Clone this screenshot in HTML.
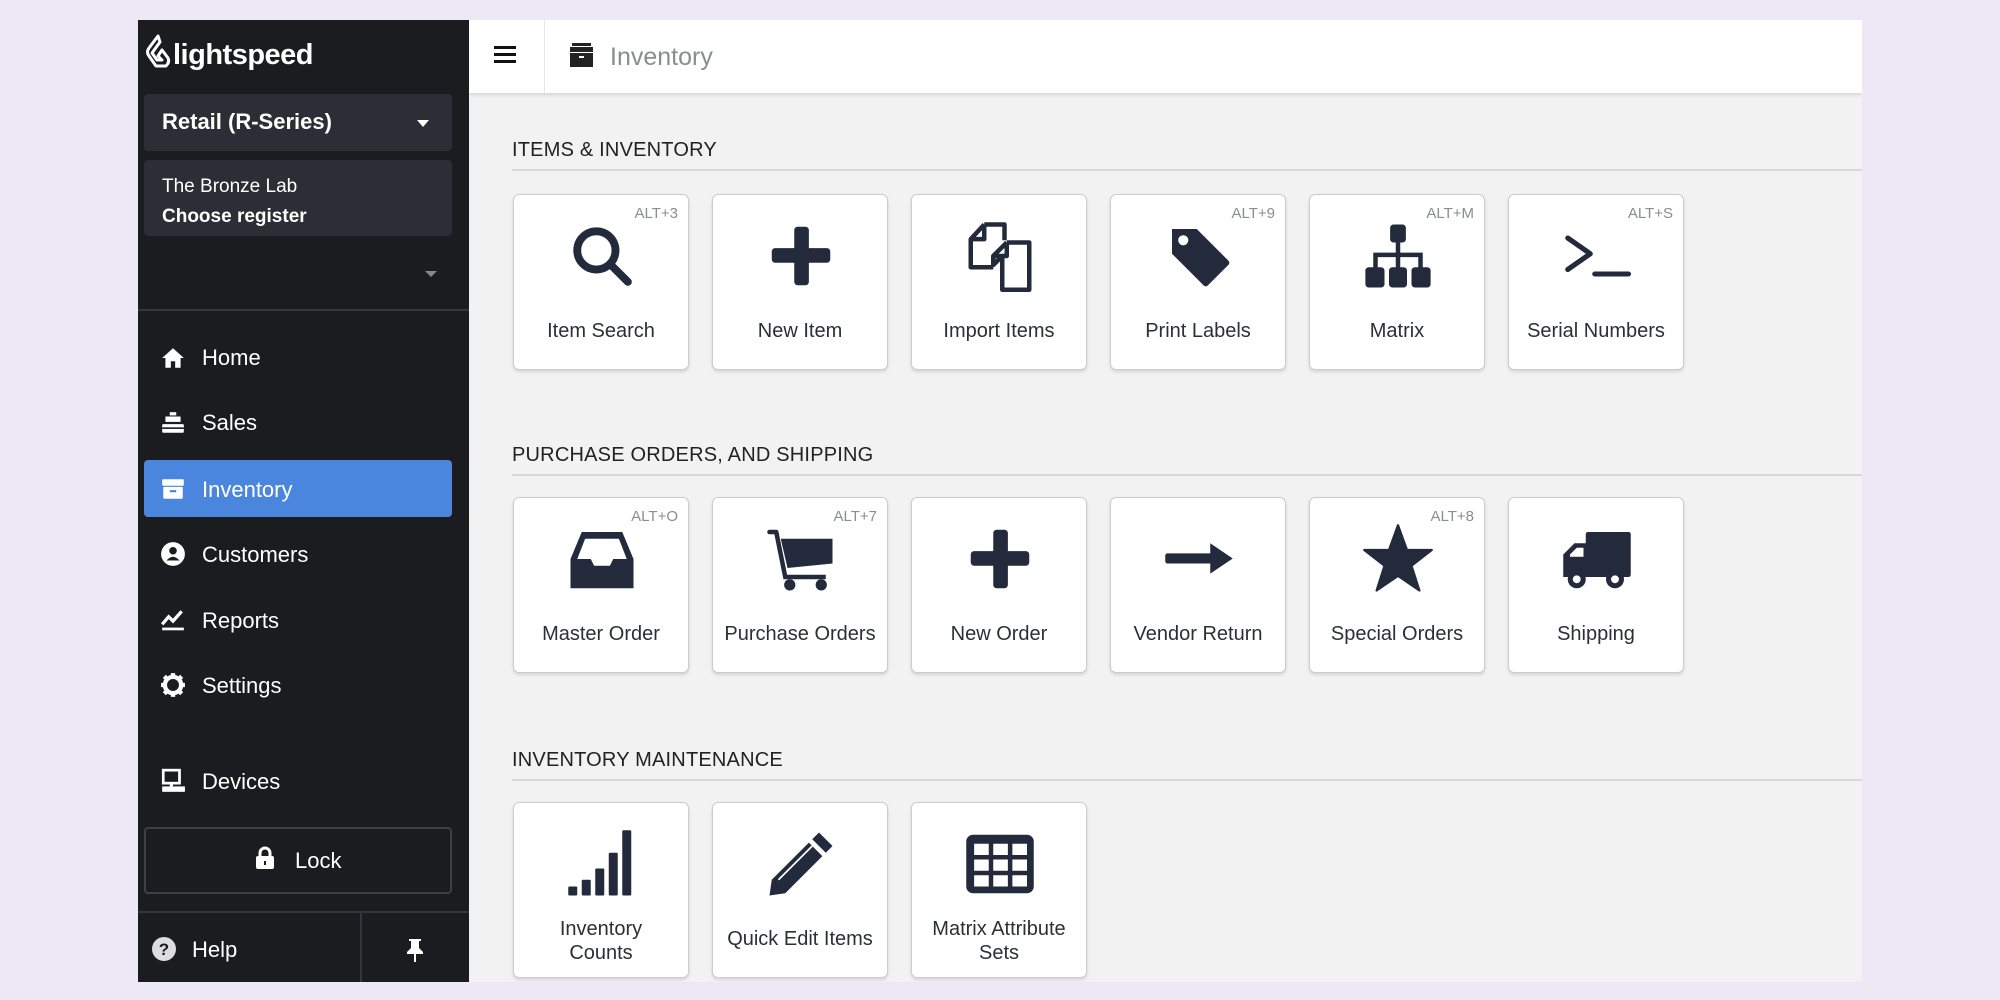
<!DOCTYPE html>
<html><head><meta charset="utf-8"><style>
*{box-sizing:border-box;margin:0;padding:0}
body{width:2000px;height:1000px;background:#ece8f6;position:relative;overflow:hidden;font-family:"Liberation Sans",sans-serif}
.sb{position:absolute;left:138px;top:20px;width:331px;height:962px;background:#1b1c20}
.main{position:absolute;left:469px;top:20px;width:1393px;height:962px;background:#f2f2f2;overflow:hidden}
.hdr{position:absolute;left:0;top:0;width:1393px;height:73px;background:#fff;box-shadow:0 2px 4px rgba(0,0,0,.12)}
.a{position:absolute}
.nav{position:absolute;left:64px;color:#fff;font-size:22px;line-height:22px}
.ni{position:absolute;left:22px;width:26px;height:26px}
.sec{position:absolute;left:43px;width:1400px;font-size:20px;color:#222;letter-spacing:.2px}
.line{position:absolute;left:43px;width:1360px;height:2px;background:#d6d8da}
.card{position:absolute;width:176px;height:176px;background:#fff;border:1.5px solid #c9cdcf;border-radius:6px;box-shadow:0 2px 3px rgba(0,0,0,.12)}
.card svg{position:absolute;left:52px;top:25px;width:72px;height:72px}
.card .l{position:absolute;left:0;right:0;top:124px;text-align:center;font-size:20px;color:#2b2f38;line-height:24px}
.card .k{position:absolute;right:10px;top:10px;font-size:15px;color:#8a8d91}
</style></head><body>
<div class="sb">
 <svg class="a" style="left:6px;top:14px" width="28" height="34" viewBox="0 0 28 34"><path d="M14 2 L5 14 Q2 18 5 22 L12 32 L22 32 Q26 28 24 24 L18 16 L14 22 L18 26 L13 26 L8 19 L16 8 Z" fill="none" stroke="#fff" stroke-width="3" stroke-linejoin="round"/></svg>
 <div class="a" style="left:35px;top:19px;color:#fff;font-size:29px;letter-spacing:-.5px;font-weight:bold">lightspeed</div>
 <div class="a" style="left:6px;top:74px;width:308px;height:57px;background:#2d2e35;border-radius:4px"></div>
 <div class="a" style="left:24px;top:89px;color:#fff;font-size:22px;font-weight:bold">Retail (R-Series)</div>
 <div class="a" style="left:279px;top:100px;border-left:6px solid transparent;border-right:6px solid transparent;border-top:7px solid #fff"></div>
 <div class="a" style="left:6px;top:140px;width:308px;height:76px;background:#2d2e35;border-radius:4px"></div>
 <div class="a" style="left:24px;top:152px;color:#fff;font-size:19px;line-height:30px">The Bronze Lab<br><b>Choose register</b></div>
 <div class="a" style="left:287px;top:251px;border-left:6px solid transparent;border-right:6px solid transparent;border-top:6px solid #888"></div>
 <div class="a" style="left:0;top:289px;width:331px;height:2px;background:#34363c"></div>

 <svg class="ni" style="top:325px" viewBox="0 0 24 24"><path d="M12 3 L2 12 H5 V21 H10 V15 H14 V21 H19 V12 H22 Z" fill="#fff"/></svg>
 <div class="nav" style="top:327px">Home</div>
 <svg class="ni" style="top:390px" viewBox="0 0 24 24"><rect x="9" y="2" width="6" height="3" fill="#fff"/><rect x="5" y="6" width="14" height="5" fill="#fff"/><rect x="2" y="13" width="20" height="8" rx="1" fill="#fff"/><rect x="2" y="16" width="20" height="1.5" fill="#1b1c20"/></svg>
 <div class="nav" style="top:392px">Sales</div>
 <div class="a" style="left:6px;top:440px;width:308px;height:57px;background:#4a86de;border-radius:4px"></div>
 <svg class="ni" style="top:456px" viewBox="0 0 24 24"><rect x="2" y="3" width="20" height="6" rx="1" fill="#fff"/><rect x="3" y="10" width="18" height="11" rx="1" fill="#fff"/><rect x="9" y="13" width="6" height="2" fill="#4a86de"/></svg>
 <div class="nav" style="top:459px">Inventory</div>
 <svg class="ni" style="top:521px" viewBox="0 0 24 24"><circle cx="12" cy="12" r="11" fill="#fff"/><circle cx="12" cy="9" r="3.5" fill="#1b1c20"/><path d="M6 18 Q12 11 18 18 Z" fill="#1b1c20"/></svg>
 <div class="nav" style="top:524px">Customers</div>
 <svg class="ni" style="top:587px" viewBox="0 0 24 24"><path d="M2 16 L8 9 L12 13 L20 4" stroke="#fff" stroke-width="3" fill="none"/><rect x="2" y="19" width="20" height="2.5" fill="#fff"/></svg>
 <div class="nav" style="top:590px">Reports</div>
 <svg class="ni" style="top:652px" viewBox="0 0 24 24"><circle cx="12" cy="12" r="7.5" fill="none" stroke="#fff" stroke-width="4"/><path d="M12 1v5M12 18v5M1 12h5M18 12h5M4 4l4 4M16 16l4 4M20 4l-4 4M4 20l4-4" stroke="#fff" stroke-width="4"/></svg>
 <div class="nav" style="top:655px">Settings</div>
 <svg class="ni" style="top:748px" viewBox="0 0 24 24"><rect x="3" y="2" width="15" height="12" fill="none" stroke="#fff" stroke-width="2.5"/><rect x="9" y="14" width="3" height="3" fill="#fff"/><rect x="2" y="17" width="21" height="5" fill="#fff"/></svg>
 <div class="nav" style="top:751px">Devices</div>
 <div class="a" style="left:6px;top:807px;width:308px;height:67px;border:2px solid #3d3f45;border-radius:4px"></div>
 <svg class="a" style="left:117px;top:826px" width="20" height="24" viewBox="0 0 20 24"><path d="M5 11 V7 A5 5 0 0 1 15 7 V11" fill="none" stroke="#fff" stroke-width="3"/><rect x="1" y="10" width="18" height="13" rx="2" fill="#fff"/><rect x="9" y="15" width="2" height="4" fill="#1b1c20"/></svg>
 <div class="a" style="left:157px;top:828px;color:#fff;font-size:22px">Lock</div>
 <div class="a" style="left:0;top:891px;width:331px;height:2px;background:#34363c"></div>
 <div class="a" style="left:222px;top:893px;width:2px;height:69px;background:#34363c"></div>
 <svg class="a" style="left:13px;top:916px" width="26" height="26" viewBox="0 0 26 26"><circle cx="13" cy="13" r="12" fill="#ddd"/><text x="13" y="19" font-size="17" font-weight="bold" text-anchor="middle" fill="#1b1c20" font-family="Liberation Sans">?</text></svg>
 <div class="a" style="left:54px;top:917px;color:#fff;font-size:22px">Help</div>
 <svg class="a" style="left:266px;top:917px" width="22" height="26" viewBox="0 0 22 26"><path d="M5 2H17V4H15V11L19 15V17H3V15L7 11V4H5Z" fill="#fff"/><rect x="10" y="17" width="2" height="8" fill="#fff"/></svg>
</div>

<div class="main">
 <div class="hdr">
  <div class="a" style="left:25px;top:26px;width:22px;height:3px;background:#111;box-shadow:0 7px 0 #111,0 14px 0 #111"></div>
  <div class="a" style="left:75px;top:0;width:1px;height:73px;background:#e6e6e6"></div>
  <svg class="a" style="left:100px;top:22px" width="25" height="26" viewBox="0 0 25 26"><rect x="3" y="1" width="19" height="3" fill="#222"/><rect x="1" y="5" width="23" height="5" fill="#222"/><rect x="1" y="11" width="23" height="14" fill="#222"/><rect x="10" y="14" width="5" height="2" fill="#fff"/></svg>
  <div class="a" style="left:141px;top:23px;font-size:25px;color:#8a8d8f">Inventory</div>
 </div>

 <div class="sec" style="top:119px">ITEMS &amp; INVENTORY</div>
 <div class="line" style="top:149px"></div>
 <div class="sec" style="top:424px">PURCHASE ORDERS, AND SHIPPING</div>
 <div class="line" style="top:454px"></div>
 <div class="sec" style="top:729px">INVENTORY MAINTENANCE</div>
 <div class="line" style="top:759px"></div>

 <!-- row 1 -->
 <div class="card" style="left:44px;top:174px"><span class="k">ALT+3</span>
  <svg viewBox="0 0 64 64"><circle cx="27" cy="27" r="17" fill="none" stroke="#232a3b" stroke-width="7"/><line x1="40" y1="40" x2="55" y2="55" stroke="#232a3b" stroke-width="7" stroke-linecap="round"/></svg><div class="l">Item Search</div></div>
 <div class="card" style="left:243px;top:174px">
  <svg viewBox="0 0 64 64"><rect x="26" y="6" width="13" height="52" rx="3" fill="#232a3b"/><rect x="6" y="25" width="52" height="13" rx="3" fill="#232a3b"/></svg><div class="l">New Item</div></div>
 <div class="card" style="left:442px;top:174px">
  <svg viewBox="0 0 64 64" fill="none" stroke="#232a3b" stroke-width="4" stroke-linejoin="round"><path d="M18 4H36V18 M18 4L6 17V42H26 M6 17H18V4"/><path d="M38 20H58V62H34V32L26 40V32 M38 20L26 32H38V20"/></svg><div class="l">Import Items</div></div>
 <div class="card" style="left:641px;top:174px"><span class="k">ALT+9</span>
  <svg viewBox="0 0 64 64"><path d="M8 8H30L58 36Q60 38 58 40L40 58Q38 60 36 58L8 30Z" fill="#232a3b"/><circle cx="18" cy="18" r="4.5" fill="#fff"/></svg><div class="l">Print Labels</div></div>
 <div class="card" style="left:840px;top:174px"><span class="k">ALT+M</span>
  <svg viewBox="0 0 64 64" fill="#232a3b"><rect x="25" y="4" width="14" height="16" rx="3"/><rect x="30" y="18" width="4" height="14"/><path d="M12 44V31H52V44" fill="none" stroke="#232a3b" stroke-width="4"/><rect x="30" y="30" width="4" height="14"/><rect x="3" y="42" width="17" height="18" rx="3"/><rect x="24" y="42" width="16" height="18" rx="3"/><rect x="44" y="42" width="17" height="18" rx="3"/></svg><div class="l">Matrix</div></div>
 <div class="card" style="left:1039px;top:174px"><span class="k">ALT+S</span>
  <svg viewBox="0 0 64 64" fill="none" stroke="#232a3b" stroke-width="4.5" stroke-linecap="round" stroke-linejoin="round"><polyline points="6,16 26,30 6,44"/><line x1="30" y1="48" x2="60" y2="48"/></svg><div class="l">Serial Numbers</div></div>

 <!-- row 2 -->
 <div class="card" style="left:44px;top:477px"><span class="k">ALT+O</span>
  <svg viewBox="0 0 64 64"><path d="M14 8H50L60 32V58H4V32Z" fill="#232a3b"/><path d="M17 14H47L54 32H42L39 38H25L22 32H10Z" fill="#fff"/></svg><div class="l">Master Order</div></div>
 <div class="card" style="left:243px;top:477px"><span class="k">ALT+7</span>
  <svg viewBox="0 0 64 64" fill="#232a3b"><rect x="2" y="6" width="10" height="4" rx="2"/><path d="M10 8L18 48H54" fill="none" stroke="#232a3b" stroke-width="4"/><path d="M14 14H60V36L20 40Z"/><circle cx="22" cy="55" r="5"/><circle cx="50" cy="55" r="5"/></svg><div class="l">Purchase Orders</div></div>
 <div class="card" style="left:442px;top:477px">
  <svg viewBox="0 0 64 64"><rect x="26" y="6" width="13" height="52" rx="3" fill="#232a3b"/><rect x="6" y="25" width="52" height="13" rx="3" fill="#232a3b"/></svg><div class="l">New Order</div></div>
 <div class="card" style="left:641px;top:477px">
  <svg viewBox="0 0 64 64"><rect x="2" y="27" width="46" height="9" rx="2" fill="#232a3b"/><path d="M42 18L62 31.5L42 45Z" fill="#232a3b"/></svg><div class="l">Vendor Return</div></div>
 <div class="card" style="left:840px;top:477px"><span class="k">ALT+8</span>
  <svg viewBox="0 0 64 64"><path d="M32 2L40 24L62 24L44 38L51 60L32 47L13 60L20 38L2 24L24 24Z" fill="#232a3b" stroke="#232a3b" stroke-width="2" stroke-linejoin="round"/></svg><div class="l">Special Orders</div></div>
 <div class="card" style="left:1039px;top:477px">
  <svg viewBox="0 0 64 64" fill="#232a3b"><rect x="22" y="8" width="40" height="40" rx="2"/><path d="M2 48V28L12 18H24V48Z"/><path d="M8 28L14 22H20V30H8Z" fill="#fff"/><circle cx="14" cy="50" r="8"/><circle cx="14" cy="50" r="3.5" fill="#fff"/><circle cx="48" cy="50" r="8"/><circle cx="48" cy="50" r="3.5" fill="#fff"/></svg><div class="l">Shipping</div></div>

 <!-- row 3 -->
 <div class="card" style="left:44px;top:782px">
  <svg viewBox="0 0 64 64" fill="#232a3b"><rect x="2" y="52" width="8" height="8" rx="1"/><rect x="14" y="46" width="8" height="14" rx="1"/><rect x="26" y="36" width="8" height="24" rx="1"/><rect x="38" y="22" width="8" height="38" rx="1"/><rect x="50" y="2" width="8" height="58" rx="1"/></svg><div class="l" style="top:114px">Inventory<br>Counts</div></div>
 <div class="card" style="left:243px;top:782px">
  <svg viewBox="0 0 64 64"><path d="M48 4L60 16L54 22L42 10Z" fill="#232a3b"/><path d="M39 13L51 25L18 58L4 60L6 46Z" fill="#232a3b"/><line x1="12" y1="46" x2="42" y2="16" stroke="#fff" stroke-width="1.5"/></svg><div class="l" style="top:124px">Quick Edit Items</div></div>
 <div class="card" style="left:442px;top:782px">
  <svg viewBox="0 0 64 64" fill="#232a3b"><rect x="2" y="6" width="60" height="52" rx="6"/><g fill="#fff"><rect x="9" y="14" width="13" height="10"/><rect x="26" y="14" width="13" height="10"/><rect x="43" y="14" width="13" height="10"/><rect x="9" y="28" width="13" height="10"/><rect x="26" y="28" width="13" height="10"/><rect x="43" y="28" width="13" height="10"/><rect x="9" y="42" width="13" height="10"/><rect x="26" y="42" width="13" height="10"/><rect x="43" y="42" width="13" height="10"/></g></svg><div class="l" style="top:114px">Matrix Attribute<br>Sets</div></div>
</div>
</body></html>
